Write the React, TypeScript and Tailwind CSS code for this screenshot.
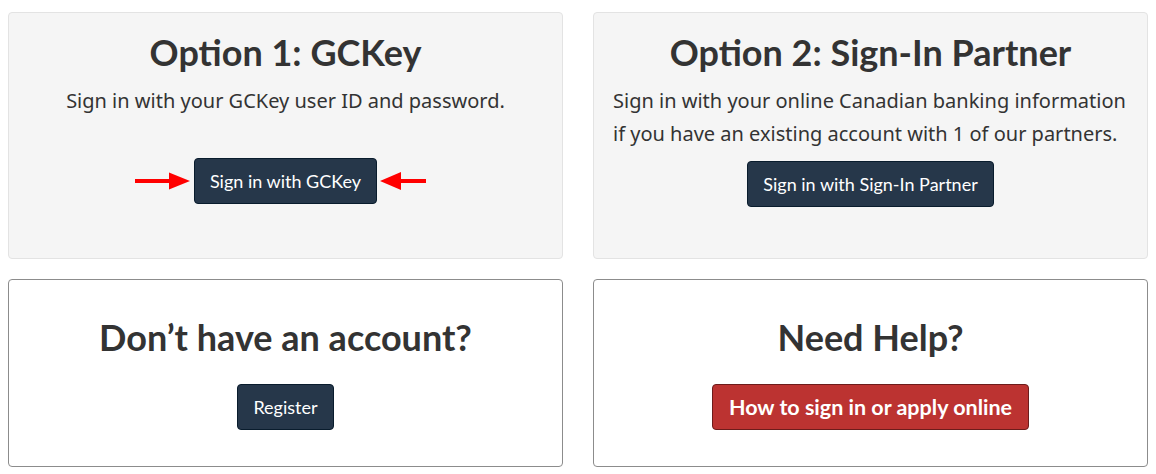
import React from "react";

function Arrow({ dir }: { dir: "right" | "left" }) {
  return dir === "right" ? (
    <svg width="55" height="18" viewBox="0 0 55 18" className="shrink-0">
      <g fill="#ff0000">
        <rect x="0" y="7" width="36" height="4" />
        <polygon points="34,0.5 55,9 34,17.5" />
      </g>
    </svg>
  ) : (
    <svg width="46" height="18" viewBox="0 0 46 18" className="shrink-0">
      <g fill="#ff0000">
        <rect x="19" y="7" width="27" height="4" />
        <polygon points="21,0 0,9 21,18" />
      </g>
    </svg>
  );
}

function Btn({ children, red }: { children: React.ReactNode; red?: boolean }) {
  return (
    <button
      className={
        red
          ? "h-[46px] px-[16px] rounded-[4px] border border-[#6d1c1b] bg-[#bc3331] text-white text-[21.5px] font-bold font-['Lato']"
          : "h-[46px] px-[15px] rounded-[4px] border border-[#091c2d] bg-[#26374a] text-white text-[18px] font-['Lato']"
      }
    >
      {children}
    </button>
  );
}

export default function App() {
  return (
    <div className="w-[1156px] h-[474px] bg-white text-[#333] font-['Noto_Sans'] pt-[12px]">
      <div className="flex pl-[8px] gap-[30px]">
        <div className="w-[555px] h-[247px] bg-[#f5f5f5] border border-[#e3e3e3] rounded-[4px] flex flex-col items-center pt-[18px]">
          <h2 className="text-[36px] leading-[42px] font-bold font-['Lato']">Option 1: GCKey</h2>
          <p className="mt-[11px] text-[20px] leading-[33px] text-center">Sign in with your GCKey user ID and password.</p>
          <div className="mt-[41px] flex items-center">
            <div className="w-[59px] pr-[4px] flex"><Arrow dir="right" /></div>
            <Btn>Sign in with GCKey</Btn>
            <div className="w-[59px] pl-[3px] flex"><Arrow dir="left" /></div>
          </div>
        </div>
        <div className="w-[555px] h-[247px] bg-[#f5f5f5] border border-[#e3e3e3] rounded-[4px] flex flex-col items-center pt-[18px] px-[19px]">
          <h2 className="text-[36px] leading-[42px] font-bold font-['Lato']">Option 2: Sign-In Partner</h2>
          <p className="mt-[11px] text-[20px] leading-[33px] self-stretch">
            Sign in with your online Canadian banking information if you have an existing account with 1 of our partners.
          </p>
          <div className="mt-[11px]">
            <Btn>Sign in with Sign-In Partner</Btn>
          </div>
        </div>
      </div>
      <div className="flex pl-[8px] gap-[30px] mt-[20px]">
        <div className="w-[555px] h-[188px] border border-[#8c8c8c] rounded-[4px] flex flex-col items-center pt-[36px]">
          <h2 className="text-[36px] leading-[42px] font-bold font-['Lato']">Don’t have an account?</h2>
          <div className="mt-[26px]">
            <Btn>Register</Btn>
          </div>
        </div>
        <div className="w-[555px] h-[188px] border border-[#8c8c8c] rounded-[4px] flex flex-col items-center pt-[36px]">
          <h2 className="text-[36px] leading-[42px] font-bold font-['Lato']">Need Help?</h2>
          <div className="mt-[26px]">
            <Btn red>How to sign in or apply online</Btn>
          </div>
        </div>
      </div>
    </div>
  );
}
